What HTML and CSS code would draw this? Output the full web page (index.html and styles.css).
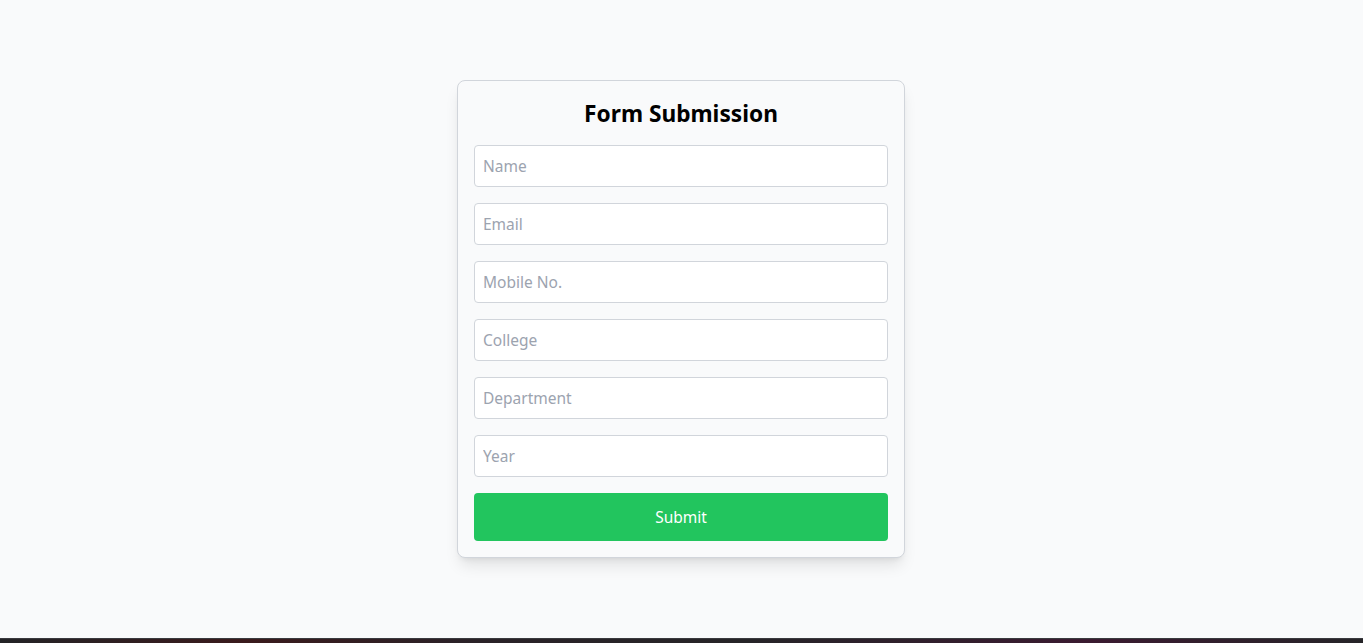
FILE: index.html
```html
<!DOCTYPE html>
<html lang="en">
<head>
<meta charset="utf-8">
<title>Form Submission</title>
<link rel="stylesheet" href="styles.css">
</head>
<body>
<main class="page">
  <form class="card">
    <h1 class="title">Form Submission</h1>
    <input class="field" type="text" placeholder="Name">
    <input class="field" type="email" placeholder="Email">
    <input class="field" type="text" placeholder="Mobile No.">
    <input class="field" type="text" placeholder="College">
    <input class="field" type="text" placeholder="Department">
    <input class="field" type="text" placeholder="Year">
    <button class="submit" type="button">Submit</button>
  </form>
</main>
<div class="taskbar"></div>
</body>
</html>
```

FILE: styles.css
```css
* { box-sizing: border-box; }
html, body { margin: 0; padding: 0; height: 100%; }
body {
  display: flex;
  flex-direction: column;
  background: #f9fafb;
  font-family: "Noto Sans", "Open Sans", sans-serif;
}
.page {
  flex: 1;
  display: flex;
  align-items: center;
  justify-content: center;
  padding-right: 1px;
}
.card {
  width: 448px;
  background: #f9fafb;
  border: 1px solid #d1d5db;
  border-radius: 8px;
  padding: 16px;
  box-shadow: 0 10px 15px -3px rgba(0,0,0,0.1), 0 4px 6px -4px rgba(0,0,0,0.1);
  display: flex;
  flex-direction: column;
  gap: 16px;
}
.title {
  margin: 0;
  font-size: 22.7px;
  line-height: 32px;
  padding-top: 1px;
  height: 32px;
  font-weight: 700;
  text-align: center;
  color: #000;
}
.field {
  display: block;
  width: 100%;
  margin: 0;
  padding: 8px 8px 8px 8px;
  font: inherit;
  font-size: 15.5px;
  line-height: 24px;
  height: 42px;
  color: #111827;
  background: #fff;
  border: 1px solid #d1d5db;
  border-radius: 4px;
  outline: none;
}
.field::placeholder { color: #9ca3af; }
.submit {
  display: block;
  width: 100%;
  height: 48px;
  padding: 12px;
  font: inherit;
  font-size: 15.5px;
  line-height: 24px;
  color: #fff;
  background: #22c55e;
  border: none;
  border-radius: 4px;
}
.taskbar {
  height: 5px;
  flex: none;
  background: linear-gradient(90deg, #232326 0%, #3a1a1c 18%, #2a2228 35%, #262428 55%, #3a1a30 80%, #262428 100%);
  border-top: 1px solid #3a3a3e;
}
```
